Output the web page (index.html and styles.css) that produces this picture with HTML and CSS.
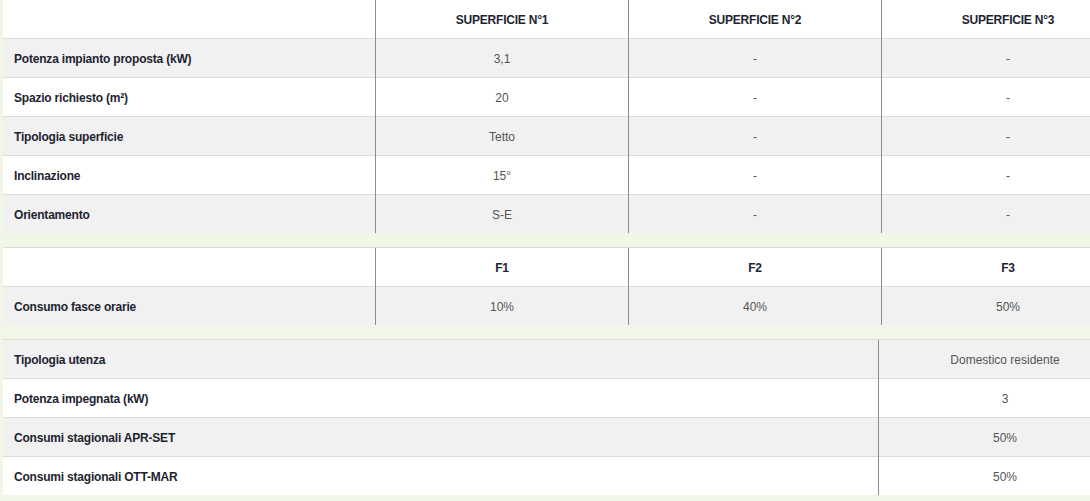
FILE: index.html
```html
<!DOCTYPE html>
<html lang="it">
<head>
    <meta charset="UTF-8">
    <title>Superfici impianto</title>
    <link rel="stylesheet" href="styles.css">
</head>
<body>
<div id="wrap">
    <table class="grid first">
        <tr class="head">
            <td class="label"></td>
            <td class="val">SUPERFICIE N°1</td>
            <td class="val">SUPERFICIE N°2</td>
            <td class="val">SUPERFICIE N°3</td>
        </tr>
        <tr class="odd">
            <td class="label">Potenza impianto proposta (kW)</td>
            <td class="val">3,1</td>
            <td class="val">-</td>
            <td class="val">-</td>
        </tr>
        <tr>
            <td class="label">Spazio richiesto (m²)</td>
            <td class="val">20</td>
            <td class="val">-</td>
            <td class="val">-</td>
        </tr>
        <tr class="odd">
            <td class="label">Tipologia superficie</td>
            <td class="val">Tetto</td>
            <td class="val">-</td>
            <td class="val">-</td>
        </tr>
        <tr>
            <td class="label">Inclinazione</td>
            <td class="val">15°</td>
            <td class="val">-</td>
            <td class="val">-</td>
        </tr>
        <tr class="odd">
            <td class="label">Orientamento</td>
            <td class="val">S-E</td>
            <td class="val">-</td>
            <td class="val">-</td>
        </tr>
    </table>

    <table class="grid">
        <tr class="head">
            <td class="label"></td>
            <td class="val">F1</td>
            <td class="val">F2</td>
            <td class="val">F3</td>
        </tr>
        <tr class="odd">
            <td class="label">Consumo fasce orarie</td>
            <td class="val">10%</td>
            <td class="val">40%</td>
            <td class="val">50%</td>
        </tr>
    </table>

    <table class="grid wide">
        <tr class="odd">
            <td class="label">Tipologia utenza</td>
            <td class="val">Domestico residente</td>
        </tr>
        <tr>
            <td class="label">Potenza impegnata (kW)</td>
            <td class="val">3</td>
        </tr>
        <tr class="odd">
            <td class="label">Consumi stagionali APR-SET</td>
            <td class="val">50%</td>
        </tr>
        <tr>
            <td class="label">Consumi stagionali OTT-MAR</td>
            <td class="val">50%</td>
        </tr>
    </table>
</div>
</body>
</html>
```

FILE: styles.css
```css
html, body {
    margin: 0;
    padding: 0;
}
body {
    background: #f0f7e6;
    font-family: "Liberation Sans", Arial, sans-serif;
    font-size: 12px;
    color: #1d2430;
    overflow: hidden;
}
#wrap {
    padding-left: 3px;
    width: 1127px;
}
.grid {
    width: 1127px;
    border-collapse: collapse;
    table-layout: fixed;
    background: #fff;
    margin-bottom: 14px;
}
.grid td {
    height: 37px;
    padding: 1px 0 0;
    border-top: 1px solid #dcdcdc;
    vertical-align: middle;
}
.grid.first tr:first-child td {
    border-top: none;
}
.grid .odd td {
    background: #f1f1f1;
}
.grid .label {
    width: 361px;
    padding-left: 11px;
    font-weight: bold;
    letter-spacing: -0.2px;
}
.grid .val {
    width: 252px;
    text-align: center;
    color: #555;
    border-left: 1px solid #8c8c8c;
}
.grid .head .val {
    font-weight: bold;
    letter-spacing: -0.2px;
    color: #1d2430;
}
.grid.wide .label {
    width: 864px;
}
.grid.wide .val {
    width: 252px;
}
```
